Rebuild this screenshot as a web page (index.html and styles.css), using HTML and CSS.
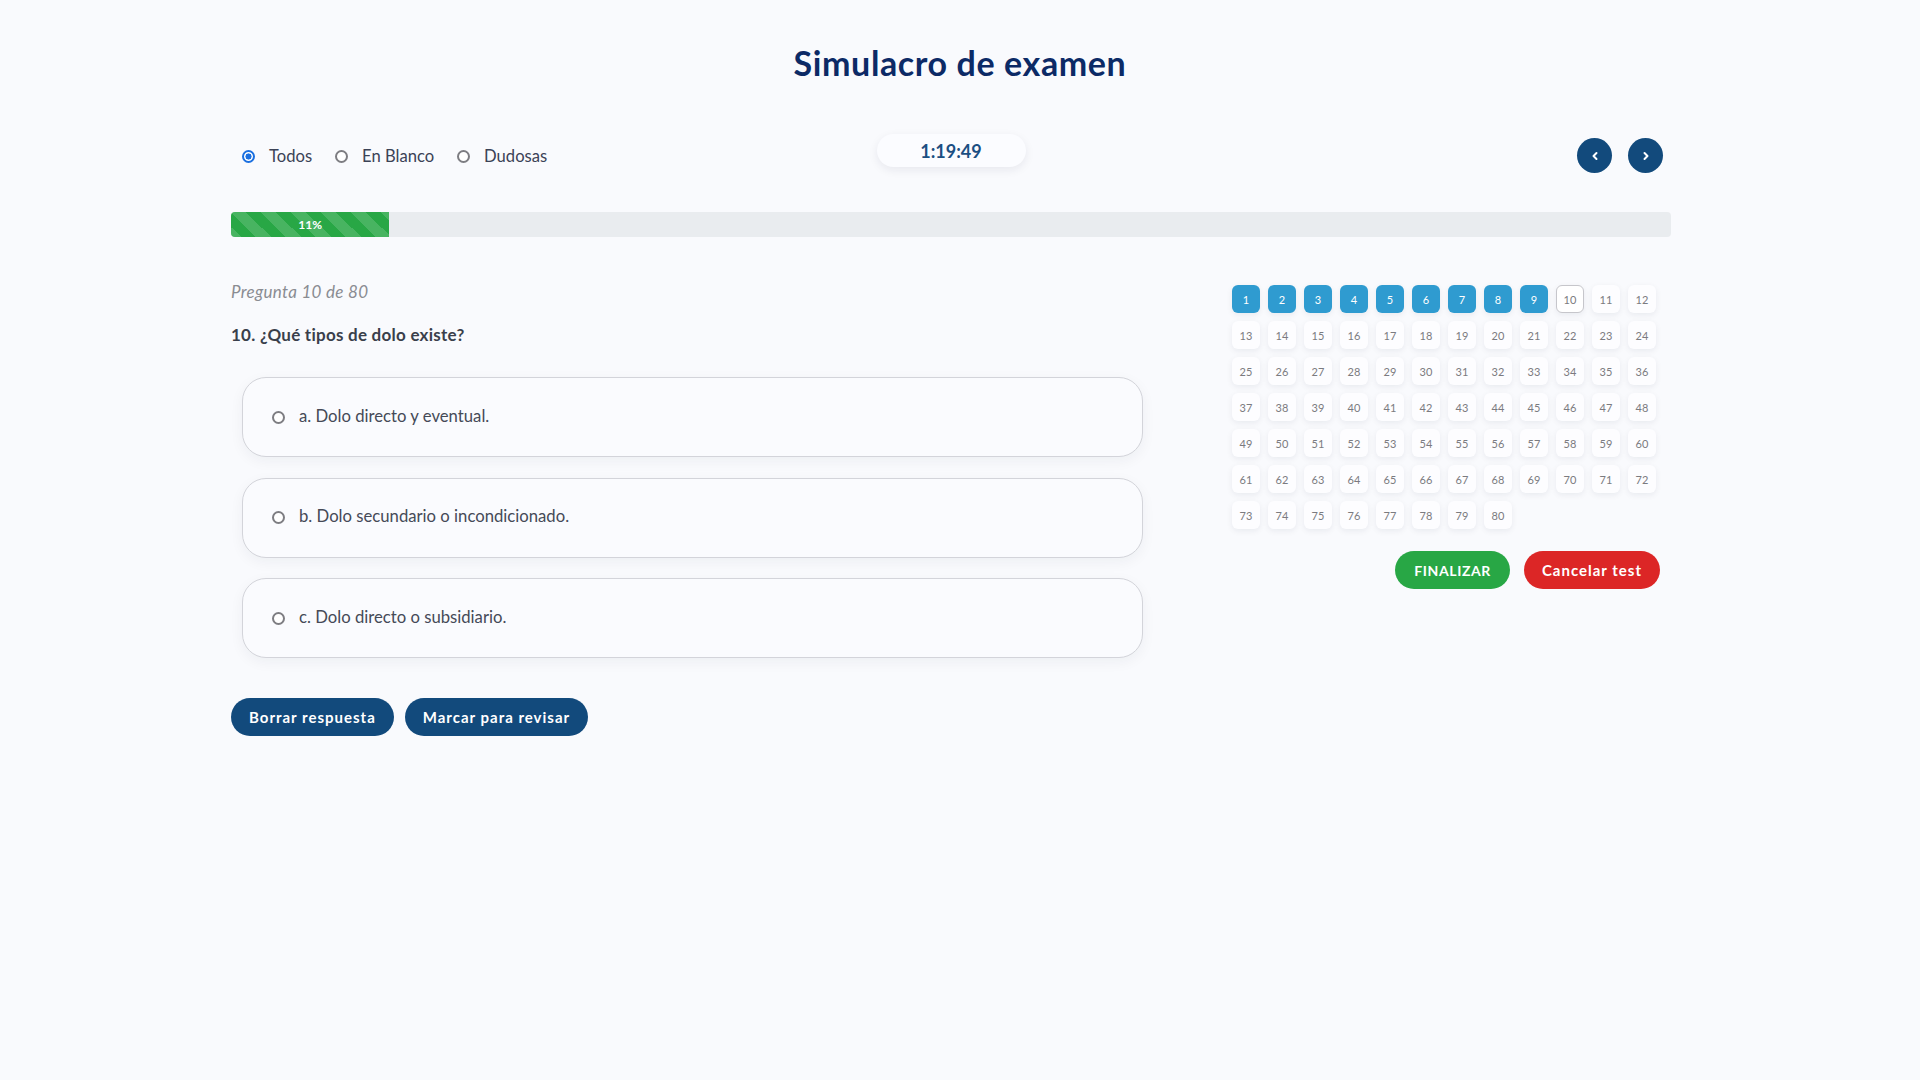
FILE: index.html
```html
<!DOCTYPE html>
<html lang="es">
<head>
<meta charset="utf-8">
<title>Simulacro de examen</title>
<link rel="stylesheet" href="styles.css">
</head>
<body>
<h1 class="title">Simulacro de examen</h1>
<div class="container">
  <div class="toolbar">
    <div class="filters">
      <label class="filter"><span class="radio checked"></span><span>Todos</span></label>
      <label class="filter"><span class="radio"></span><span>En Blanco</span></label>
      <label class="filter"><span class="radio"></span><span>Dudosas</span></label>
    </div>
    <div class="timer">1:19:49</div>
    <div class="nav">
      <button class="nav-btn" aria-label="Anterior"><svg width="10" height="10" viewBox="0 0 10 10"><polyline points="6.5,2 3.5,5 6.5,8" fill="none" stroke="#fff" stroke-width="2" stroke-linecap="round" stroke-linejoin="round"/></svg></button>
      <button class="nav-btn" aria-label="Siguiente"><svg width="10" height="10" viewBox="0 0 10 10"><polyline points="3.5,2 6.5,5 3.5,8" fill="none" stroke="#fff" stroke-width="2" stroke-linecap="round" stroke-linejoin="round"/></svg></button>
    </div>
  </div>

  <div class="progress"><div class="progress-bar" style="width: 11%">11%</div></div>

  <div class="main">
    <div class="question-col">
      <p class="meta">Pregunta 10 de 80</p>
      <p class="question">10. ¿Qué tipos de dolo existe?</p>
      <div class="option"><span class="radio"></span><span>a. Dolo directo y eventual.</span></div>
      <div class="option"><span class="radio"></span><span>b. Dolo secundario o incondicionado.</span></div>
      <div class="option"><span class="radio"></span><span>c. Dolo directo o subsidiario.</span></div>
      <div class="actions">
        <button class="btn btn-navy">Borrar respuesta</button>
        <button class="btn btn-navy">Marcar para revisar</button>
      </div>
    </div>
    <div class="side-col">
      <div class="grid">
        <span class="cell done">1</span><span class="cell done">2</span><span class="cell done">3</span><span class="cell done">4</span><span class="cell done">5</span><span class="cell done">6</span><span class="cell done">7</span><span class="cell done">8</span><span class="cell done">9</span><span class="cell current">10</span><span class="cell">11</span><span class="cell">12</span>
        <span class="cell">13</span><span class="cell">14</span><span class="cell">15</span><span class="cell">16</span><span class="cell">17</span><span class="cell">18</span><span class="cell">19</span><span class="cell">20</span><span class="cell">21</span><span class="cell">22</span><span class="cell">23</span><span class="cell">24</span>
        <span class="cell">25</span><span class="cell">26</span><span class="cell">27</span><span class="cell">28</span><span class="cell">29</span><span class="cell">30</span><span class="cell">31</span><span class="cell">32</span><span class="cell">33</span><span class="cell">34</span><span class="cell">35</span><span class="cell">36</span>
        <span class="cell">37</span><span class="cell">38</span><span class="cell">39</span><span class="cell">40</span><span class="cell">41</span><span class="cell">42</span><span class="cell">43</span><span class="cell">44</span><span class="cell">45</span><span class="cell">46</span><span class="cell">47</span><span class="cell">48</span>
        <span class="cell">49</span><span class="cell">50</span><span class="cell">51</span><span class="cell">52</span><span class="cell">53</span><span class="cell">54</span><span class="cell">55</span><span class="cell">56</span><span class="cell">57</span><span class="cell">58</span><span class="cell">59</span><span class="cell">60</span>
        <span class="cell">61</span><span class="cell">62</span><span class="cell">63</span><span class="cell">64</span><span class="cell">65</span><span class="cell">66</span><span class="cell">67</span><span class="cell">68</span><span class="cell">69</span><span class="cell">70</span><span class="cell">71</span><span class="cell">72</span>
        <span class="cell">73</span><span class="cell">74</span><span class="cell">75</span><span class="cell">76</span><span class="cell">77</span><span class="cell">78</span><span class="cell">79</span><span class="cell">80</span>
      </div>
      <div class="side-actions">
        <button class="btn btn-green">FINALIZAR</button>
        <button class="btn btn-red">Cancelar test</button>
      </div>
    </div>
  </div>
</div>
</body>
</html>
```

FILE: styles.css
```css
* { box-sizing: border-box; }

html, body {
  margin: 0;
  padding: 0;
  background: #f9fafd;
  font-family: Lato, "Noto Sans", sans-serif;
  color: #3d4250;
}

.title {
  margin: 43px 0 0;
  text-align: center;
  font-size: 34px;
  line-height: 40px;
  font-weight: 700;
  letter-spacing: 0.6px;
  color: #0c2a66;
}

.container {
  width: 1440px;
  margin-left: 231px;
}

.toolbar {
  display: grid;
  grid-template-columns: 1fr auto 1fr;
  align-items: start;
  margin-top: 51px;
}

.filters {
  display: flex;
  align-items: center;
  padding-left: 11px;
  margin-top: 12px;
  gap: 23px;
}

.filter {
  display: flex;
  align-items: center;
  gap: 14px;
  font-size: 16.6px;
  line-height: 20px;
  color: #3b4256;
}

.radio {
  display: inline-block;
  flex: none;
  width: 13px;
  height: 13px;
  border-radius: 50%;
  border: 2px solid #7d7d82;
  background: #fff;
}

.radio.checked {
  border-color: #1a6fe0;
  background: radial-gradient(circle, #1a6fe0 0 2.8px, #fff 3.3px);
}

.timer {
  width: 149px;
  height: 33px;
  border-radius: 17px;
  background: #fbfcff;
  box-shadow: 0 3px 10px rgba(20, 30, 60, 0.08);
  display: flex;
  align-items: center;
  justify-content: center;
  font-size: 18px;
  font-weight: 700;
  color: #1b4f82;
}

.nav {
  display: flex;
  justify-content: flex-end;
  gap: 16px;
  padding-right: 8px;
  margin-top: 4px;
}

.nav-btn {
  width: 35px;
  height: 35px;
  border-radius: 50%;
  border: none;
  padding: 0;
  background: #124a7c;
  display: flex;
  align-items: center;
  justify-content: center;
}

.progress {
  margin-top: 39px;
  height: 25px;
  border-radius: 4px;
  background: #e9ecef;
  overflow: hidden;
  display: flex;
}

.progress-bar {
  height: 100%;
  background-color: #28a745;
  background-image: linear-gradient(45deg, rgba(255,255,255,.15) 25%, transparent 25%, transparent 50%, rgba(255,255,255,.15) 50%, rgba(255,255,255,.15) 75%, transparent 75%, transparent);
  background-size: 30px 30px;
  color: #fff;
  font-size: 12px;
  font-weight: 700;
  display: flex;
  align-items: center;
  justify-content: center;
}

.main {
  display: grid;
  grid-template-columns: 923px 428px;
  column-gap: 78px;
  margin-top: 45px;
}

.meta {
  margin: 0;
  font-size: 17px;
  line-height: 20px;
  font-style: italic;
  letter-spacing: 0.3px;
  color: #8a8c92;
}

.question {
  margin: 23px 0 32px;
  font-size: 17px;
  line-height: 20px;
  font-weight: 700;
  letter-spacing: 0.25px;
  color: #3a3f4b;
}

.option {
  height: 80px;
  margin: 0 11px 20.5px;
  border: 1px solid #d3d4da;
  border-radius: 24px;
  background: #fafbfe;
  box-shadow: 0 4px 14px rgba(20, 30, 60, 0.05);
  display: flex;
  align-items: center;
  gap: 14px;
  padding-left: 29px;
  padding-bottom: 3px;
  font-size: 16.7px;
  color: #454a57;
}

.option .radio {
  margin-top: 3px;
}

.actions {
  display: flex;
  gap: 11px;
  margin-top: 40px;
}

.btn {
  border: none;
  border-radius: 19px;
  height: 38px;
  padding: 0 18px;
  font-family: Lato, "Noto Sans", sans-serif;
  font-size: 15px;
  font-weight: 700;
  letter-spacing: 1px;
  color: #fff;
}

.btn-navy { background: #124a7c; }
.btn-green { background: #28a745; padding: 0 19px; font-size: 14px; letter-spacing: 0.6px; }
.btn-red { background: #dc2626; padding: 0 18px; letter-spacing: 1px; }

.side-col {
  padding-top: 3px;
}

.grid {
  display: grid;
  grid-template-columns: repeat(12, 28px);
  gap: 8px;
}

.cell {
  width: 28px;
  height: 28px;
  border-radius: 6px;
  background: #fdfdff;
  box-shadow: 0 2px 6px rgba(20, 30, 60, 0.07);
  display: flex;
  align-items: center;
  justify-content: center;
  font-size: 11px;
  color: #7b7b80;
}

.cell.done {
  background: #2f9bd0;
  color: #fff;
}

.cell.current {
  border: 1px solid #c6c6cb;
  background: #fff;
}

.side-actions {
  display: flex;
  justify-content: flex-end;
  gap: 14px;
  margin-top: 22px;
}
```
